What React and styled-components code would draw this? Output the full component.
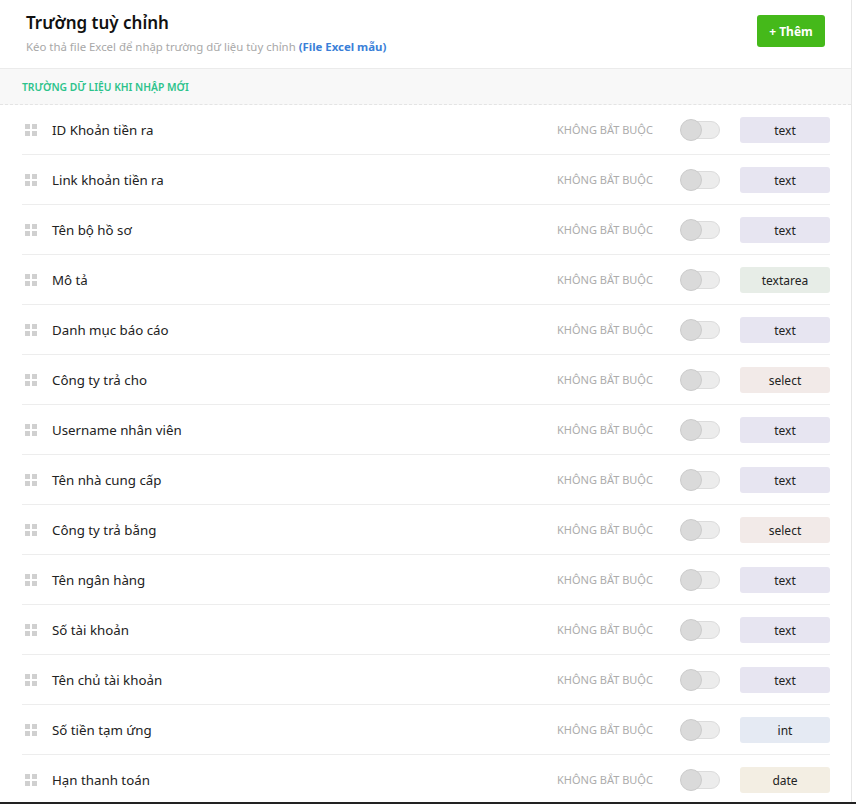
import React from 'react';
import styled, { createGlobalStyle } from 'styled-components';

const GlobalStyle = createGlobalStyle`
  html, body {
    margin: 0;
    padding: 0;
    background: #fff;
  }
  body {
    font-family: "Noto Sans", "Open Sans", sans-serif;
    color: #222;
  }
`;

const Frame = styled.div`
  height: 802px;
  overflow: hidden;
  border-bottom: 2px solid #222;
  background: #fff;
`;

const Panel = styled.div`
  width: 852px;
  height: 100%;
  border-right: 1px solid #e6e6e6;
  box-sizing: border-box;
`;

const Header = styled.div`
  display: flex;
  align-items: flex-start;
  justify-content: space-between;
  padding: 12px 26px 0 26px;
  height: 69px;
  box-sizing: border-box;
  border-bottom: 1px solid #ebebeb;
`;

const Title = styled.h1`
  margin: 0;
  font-size: 17px;
  font-weight: 600;
  color: #111;
  line-height: 22px;
`;

const Subtitle = styled.p`
  margin: 5px 0 0;
  font-size: 11.4px;
  color: #a8a8a8;

  a {
    color: #3a7fd8;
    font-weight: 700;
    text-decoration: none;
  }
`;

const AddButton = styled.button`
  margin-top: 3px;
  width: 68px;
  height: 32px;
  border: none;
  border-radius: 3px;
  background: #45b91a;
  color: #fff;
  font-family: inherit;
  font-size: 12px;
  font-weight: 700;
  cursor: pointer;
`;

const Section = styled.div`
  height: 36px;
  background: #f8f8f8;
  border-bottom: 1px dashed #e4e4e4;
  box-sizing: border-box;
  display: flex;
  align-items: center;
  padding: 1px 0 0 22px;
  font-size: 10.3px;
  font-weight: 600;
  color: #2cc38b;
`;

const List = styled.div`
  padding: 0 21px 0 22px;
`;

const Row = styled.div`
  display: flex;
  align-items: center;
  height: 50px;
  border-bottom: 1px solid #ededed;
  box-sizing: border-box;
`;

const Handle = styled.span`
  display: grid;
  grid-template-columns: 5px 5px;
  grid-template-rows: 5px 5px;
  gap: 2px;
  margin: 1px 15px 0 3px;

  i {
    background: #d0d0d0;
  }
`;

const Label = styled.span`
  flex: 1;
  font-size: 13.3px;
  color: #222;
`;

const Required = styled.span`
  font-size: 11px;
  color: #acacac;
  width: 123px;
`;

const Toggle = styled.span`
  position: relative;
  width: 40px;
  height: 22px;
  margin-right: 20px;

  &::before {
    content: '';
    position: absolute;
    left: 2px;
    right: 0;
    top: 2px;
    height: 16px;
    border-radius: 9px;
    background: #ececec;
    border: 1px solid #dcdcdc;
  }

  &::after {
    content: '';
    position: absolute;
    left: 0;
    top: 0;
    width: 20px;
    height: 20px;
    border-radius: 50%;
    background: #dadada;
    border: 1px solid #cbcbcb;
  }
`;

const typeColors = {
  text: '#e7e5f1',
  textarea: '#e7ede7',
  select: '#f2eae8',
  int: '#e5eaf3',
  date: '#f3eee3',
};

const TypeBadge = styled.span`
  width: 90px;
  height: 26px;
  border-radius: 3px;
  background: ${(p) => typeColors[p.$type] || '#eee'};
  display: flex;
  align-items: center;
  justify-content: center;
  font-size: 12px;
  color: #222;
  padding-top: 2px;
  box-sizing: border-box;
`;

const fields = [
  ['ID Khoản tiền ra', 'text'],
  ['Link khoản tiền ra', 'text'],
  ['Tên bộ hồ sơ', 'text'],
  ['Mô tả', 'textarea'],
  ['Danh mục báo cáo', 'text'],
  ['Công ty trả cho', 'select'],
  ['Username nhân viên', 'text'],
  ['Tên nhà cung cấp', 'text'],
  ['Công ty trả bằng', 'select'],
  ['Tên ngân hàng', 'text'],
  ['Số tài khoản', 'text'],
  ['Tên chủ tài khoản', 'text'],
  ['Số tiền tạm ứng', 'int'],
  ['Hạn thanh toán', 'date'],
];

const App = () => {
  return (
    <Frame>
      <GlobalStyle />
      <Panel>
        <Header>
          <div>
            <Title>Trường tuỳ chỉnh</Title>
            <Subtitle>
              Kéo thả file Excel để nhập trường dữ liệu tùy chỉnh <a href="#">(File Excel mẫu)</a>
            </Subtitle>
          </div>
          <AddButton>+ Thêm</AddButton>
        </Header>
        <Section>TRƯỜNG DỮ LIỆU KHI NHẬP MỚI</Section>
        <List>
          {fields.map(([name, type]) => (
            <Row key={name}>
              <Handle>
                <i /><i /><i /><i />
              </Handle>
              <Label>{name}</Label>
              <Required>KHÔNG BẮT BUỘC</Required>
              <Toggle />
              <TypeBadge $type={type}>{type}</TypeBadge>
            </Row>
          ))}
        </List>
      </Panel>
    </Frame>
  );
};

export default App;
